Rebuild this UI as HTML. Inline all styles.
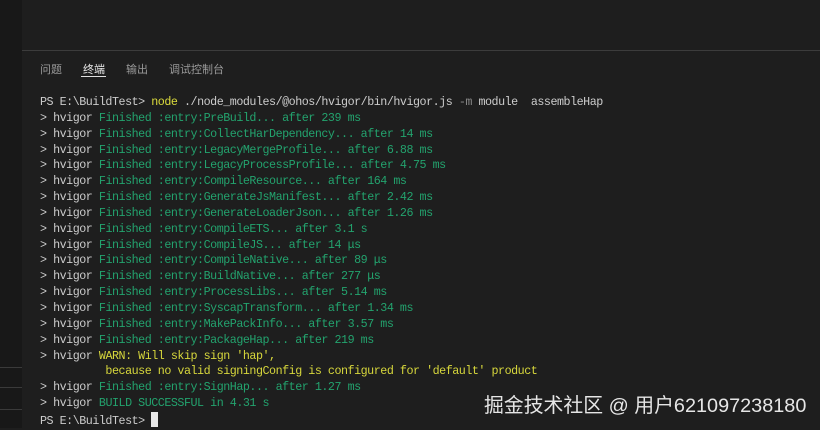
<!DOCTYPE html>
<html><head><meta charset="utf-8"><style>
body{margin:0;width:820px;height:428px;background:#1e1e1e;overflow:hidden;position:relative;font-family:"Liberation Mono",monospace}
.left{position:absolute;left:0;top:0;width:22px;height:428px;background:#181818}
.ln{position:absolute;left:0;width:22px;height:1px;background:#3a3a3a}
.sep{position:absolute;left:22px;right:0;top:50px;height:1px;background:#3c3c3c}
.tab{position:absolute;top:61px;font:11px "Liberation Sans","Noto Sans CJK SC",sans-serif;color:#9a9a9a}
.ul{position:absolute;left:81px;top:76px;width:25px;height:1px;background:#e0e0e0}
.term{position:absolute;left:40px;top:95px;font-size:11.7px;letter-spacing:-0.47px;line-height:15.85px;color:#cccccc;white-space:pre}
.g{color:#23a36e}.y{color:#dcdc3c}.m{color:#8a8a8a}.w{color:#d7d73c}
.cur{display:inline-block;width:7px;height:15px;background:#e8e8e8;vertical-align:-3px}
.wm{position:absolute;left:484px;top:389px;font:19.85px "Liberation Sans","Noto Sans CJK SC",sans-serif;color:#e6e6e6;white-space:nowrap}
</style></head><body>
<div class="left"></div>
<div class="ln" style="top:367px"></div><div class="ln" style="top:387px"></div><div class="ln" style="top:409px"></div>
<div class="sep"></div>
<div class="tab" style="left:40px">问题</div>
<div class="tab" style="left:83px;color:#e8e8e8">终端</div>
<div class="tab" style="left:126px">输出</div>
<div class="tab" style="left:169px">调试控制台</div>
<div class="ul"></div>
<div class="term">PS E:\BuildTest&gt; <span class="y">node</span> ./node_modules/@ohos/hvigor/bin/hvigor.js <span class="m">-m</span> module  assembleHap
&gt; hvigor <span class="g">Finished :entry:PreBuild... after 239 ms</span>
&gt; hvigor <span class="g">Finished :entry:CollectHarDependency... after 14 ms</span>
&gt; hvigor <span class="g">Finished :entry:LegacyMergeProfile... after 6.88 ms</span>
&gt; hvigor <span class="g">Finished :entry:LegacyProcessProfile... after 4.75 ms</span>
&gt; hvigor <span class="g">Finished :entry:CompileResource... after 164 ms</span>
&gt; hvigor <span class="g">Finished :entry:GenerateJsManifest... after 2.42 ms</span>
&gt; hvigor <span class="g">Finished :entry:GenerateLoaderJson... after 1.26 ms</span>
&gt; hvigor <span class="g">Finished :entry:CompileETS... after 3.1 s</span>
&gt; hvigor <span class="g">Finished :entry:CompileJS... after 14 μs</span>
&gt; hvigor <span class="g">Finished :entry:CompileNative... after 89 μs</span>
&gt; hvigor <span class="g">Finished :entry:BuildNative... after 277 μs</span>
&gt; hvigor <span class="g">Finished :entry:ProcessLibs... after 5.14 ms</span>
&gt; hvigor <span class="g">Finished :entry:SyscapTransform... after 1.34 ms</span>
&gt; hvigor <span class="g">Finished :entry:MakePackInfo... after 3.57 ms</span>
&gt; hvigor <span class="g">Finished :entry:PackageHap... after 219 ms</span>
&gt; hvigor <span class="w">WARN: Will skip sign 'hap',</span>
<span class="w">          because no valid signingConfig is configured for 'default' product</span>
&gt; hvigor <span class="g">Finished :entry:SignHap... after 1.27 ms</span>
&gt; hvigor <span class="g">BUILD SUCCESSFUL in 4.31 s</span>
PS E:\BuildTest&gt; <span class="cur"></span></div>
<div class="wm">掘金技术社区 @ 用户621097238180</div>
</body></html>
